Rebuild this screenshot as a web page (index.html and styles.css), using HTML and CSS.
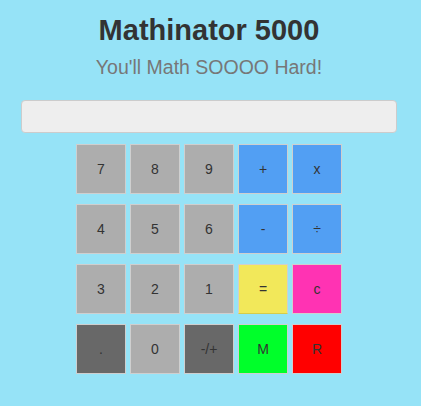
FILE: index.html
```html
<!DOCTYPE html>
<html>
<head>
<meta charset="utf-8">
<link rel="stylesheet" href="styles.css">
</head>
<body>
<div class="app">
  <h1 class="title">Mathinator 5000</h1>
  <p class="subtitle">You'll Math SOOOO Hard!</p>
  <input class="display" type="text">
  <div class="keys">
    <button class="key num">7</button>
    <button class="key num">8</button>
    <button class="key num">9</button>
    <button class="key op">+</button>
    <button class="key op">x</button>
    <button class="key num">4</button>
    <button class="key num">5</button>
    <button class="key num">6</button>
    <button class="key op">-</button>
    <button class="key op">÷</button>
    <button class="key num">3</button>
    <button class="key num">2</button>
    <button class="key num">1</button>
    <button class="key eq">=</button>
    <button class="key clr">c</button>
    <button class="key dark">.</button>
    <button class="key num">0</button>
    <button class="key dark">-/+</button>
    <button class="key mem">M</button>
    <button class="key rec">R</button>
  </div>
</div>
</body>
</html>
```
FILE: styles.css
```css
html, body {
  margin: 0;
  padding: 0;
  background: #96e3f7;
  font-family: "Liberation Sans", Arial, Helvetica, sans-serif;
}
.app {
  width: 376px;
  margin: 0 0 0 21px;
  padding-top: 13px;
  display: flex;
  flex-direction: column;
  align-items: center;
}
.title {
  margin: 0;
  font-size: 29px;
  line-height: 34px;
  font-weight: bold;
  color: #333333;
}
.subtitle {
  margin: 8px 0 0 0;
  font-size: 19.5px;
  line-height: 24px;
  color: #777777;
}
.display {
  box-sizing: border-box;
  width: 376px;
  height: 33px;
  margin: 21px 0 0 0;
  background: #eeeeee;
  border: 1px solid #cccccc;
  border-radius: 4px;
  padding: 0;
}
.keys {
  margin-top: 11px;
  display: grid;
  grid-template-columns: repeat(5, 50px);
  grid-auto-rows: 50px;
  column-gap: 4px;
  row-gap: 10px;
}
.key {
  box-sizing: border-box;
  width: 50px;
  height: 50px;
  margin: 0;
  padding: 0;
  border: 1px solid #cfcfcf;
  border-radius: 0;
  font-family: "Liberation Sans", Arial, Helvetica, sans-serif;
  font-size: 14px;
  color: #333333;
}
.num { background: #adadad; }
.op { background: #529ff3; }
.eq { background: #f2e85a; border-bottom-color: #d6cc4a; }
.clr { background: #ff33b3; }
.dark { background: #686868; }
.mem { background: #00ff2a; }
.rec { background: #ff0000; }
```
